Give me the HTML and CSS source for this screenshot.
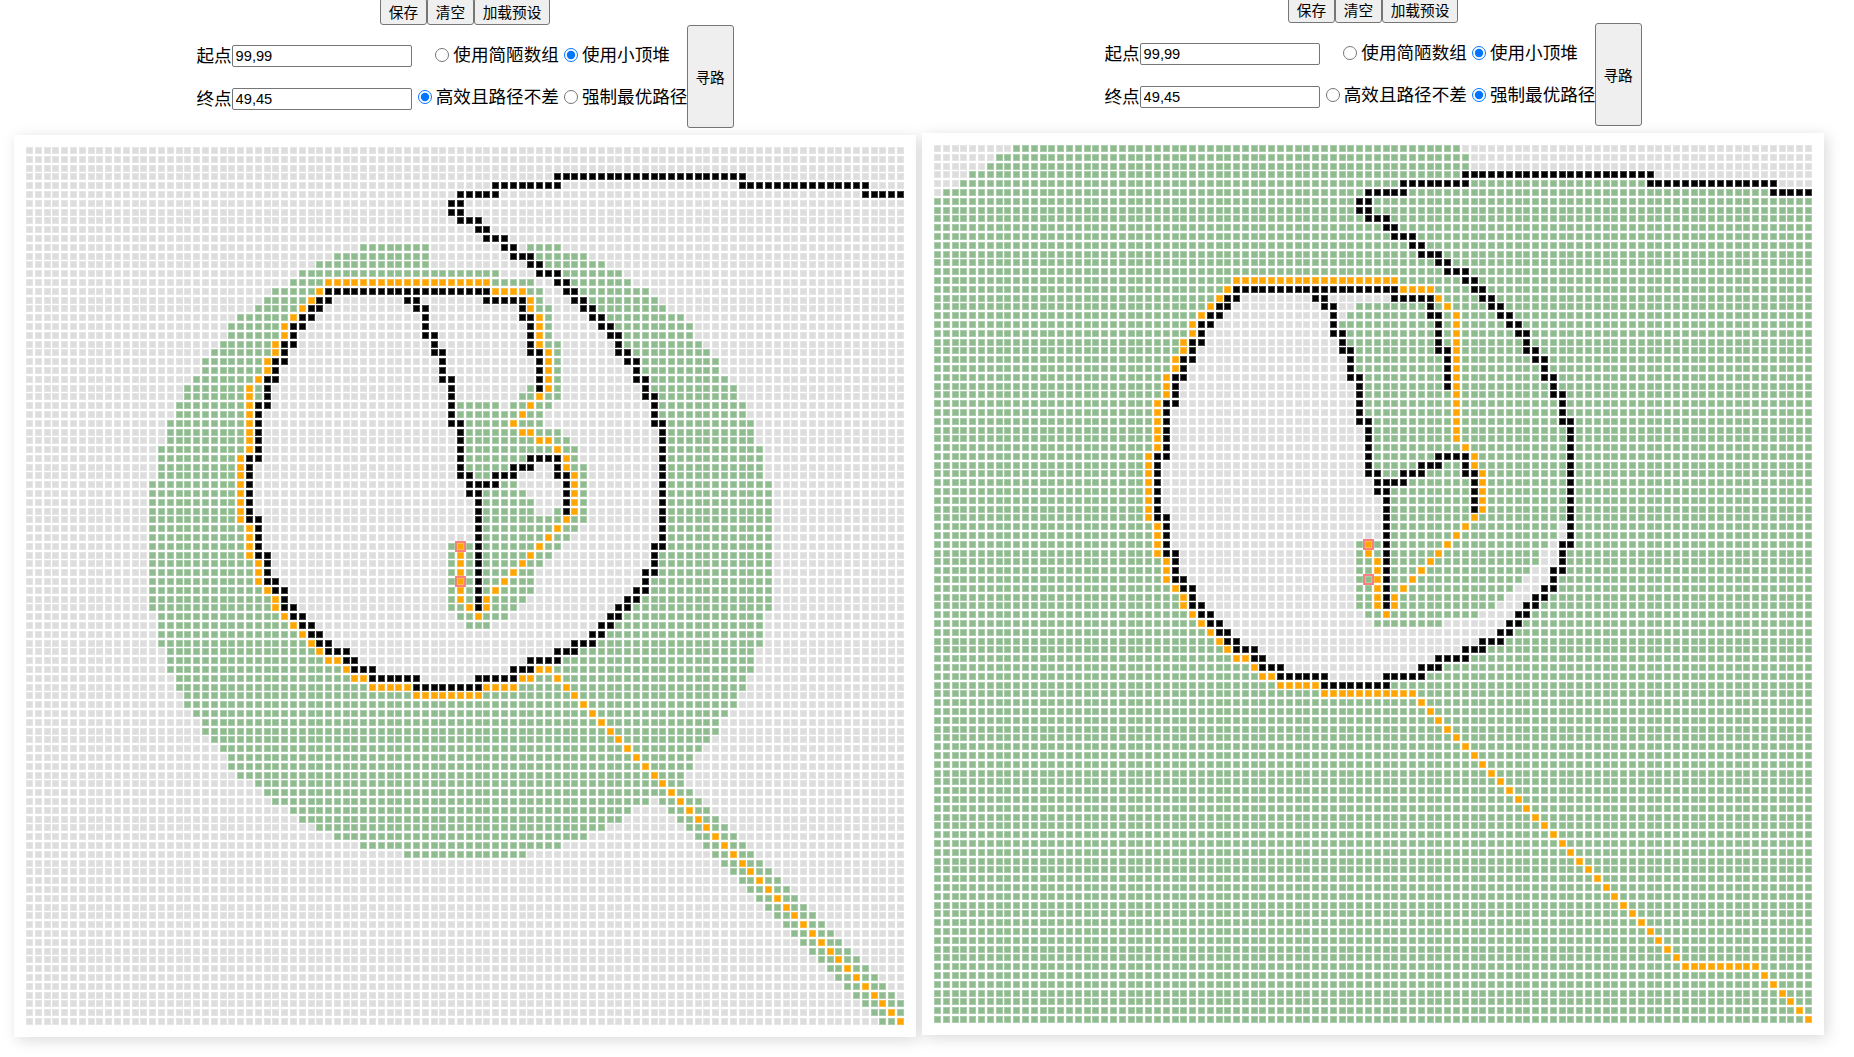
FILE: index.html
```html
<!DOCTYPE html>
<html lang="zh-CN">
<head>
<meta charset="utf-8">
<title>寻路</title>
<link rel="stylesheet" href="styles.css">
</head>
<body>
<main class="panels">
  <section class="panel">
    <div class="toolbar"><button>保存</button><button>清空</button><button>加载预设</button></div>
    <div class="form">
      <div class="points">
        <label class="point">起点<input type="text" value="99,99"></label>
        <label class="point">终点<input type="text" value="49,45"></label>
      </div>
      <div class="options">
        <div class="choice"><label><input type="radio" name="a1">使用简陋数组</label><label><input type="radio" name="a1" checked>使用小顶堆</label></div>
        <div class="choice"><label><input type="radio" name="a2" checked>高效且路径不差</label><label><input type="radio" name="a2">强制最优路径</label></div>
      </div>
      <button class="run">寻路</button>
    </div>
    <div class="board" id="fast"></div>
  </section>
  <section class="panel panel-raised">
    <div class="toolbar"><button>保存</button><button>清空</button><button>加载预设</button></div>
    <div class="form">
      <div class="points">
        <label class="point">起点<input type="text" value="99,99"></label>
        <label class="point">终点<input type="text" value="49,45"></label>
      </div>
      <div class="options">
        <div class="choice"><label><input type="radio" name="b1">使用简陋数组</label><label><input type="radio" name="b1" checked>使用小顶堆</label></div>
        <div class="choice"><label><input type="radio" name="b2">高效且路径不差</label><label><input type="radio" name="b2" checked>强制最优路径</label></div>
      </div>
      <button class="run">寻路</button>
    </div>
    <div class="board" id="best"></div>
  </section>
</main>
<script src="grid.js"></script>
</body>
</html>
```
FILE: styles.css
```css
* { box-sizing: border-box; }
body {
  margin: 0;
  height: 1057px;
  overflow: hidden;
  background: #fff;
  color: #000;
  font: 17.6px/24px "Liberation Sans", "Noto Sans CJK SC", sans-serif;
}
.panels { display: flex; align-items: flex-start; padding-left: 11px; }
.panel {
  width: 908px;
  flex: none;
  display: flex;
  flex-direction: column;
  align-items: center;
  margin-top: -2px;
}
.panel-raised { margin-top: -4px; }
.toolbar { display: flex; height: 27px; }
button {
  margin: 0;
  padding: 0 8px;
  background: #efefef;
  border: 1px solid #767676;
  border-radius: 3px;
  color: #000;
  font: 14.67px "Liberation Sans", "Noto Sans CJK SC", sans-serif;
}
.toolbar button { width: 47px; padding: 0; }
.toolbar button:last-child { width: 76px; }
.form { display: flex; height: 103px; }
.points { padding-top: 9px; }
.point { display: flex; align-items: center; height: 43px; }
.point input {
  width: 180px;
  height: 22px;
  margin: 1px 0 0;
  padding: 1px 3px;
  border: 1px solid #767676;
  border-radius: 2px;
  font: 14.67px "Liberation Sans", sans-serif;
}
.options {
  display: flex;
  flex-direction: column;
  align-items: center;
  width: 275px;
  padding: 9px 0 0 7px;
}
.choice { display: flex; gap: 5px; height: 42px; align-items: center; }
.choice label { display: flex; align-items: center; white-space: nowrap; }
.choice input { width: 14px; height: 14px; margin: 0 4px 1px 0; }
.run { width: 47px; height: 103px; padding: 0; }
.board {
  display: grid;
  grid-template: repeat(100, 8.8px) / repeat(100, 8.8px);
  margin-top: 7px;
  padding: 12px 10px 10px 12px;
  width: 902px;
  height: 902px;
  background: #fff;
  box-shadow: 3px 3px 14px rgba(0, 0, 0, .15);
}
.cell {
  width: 7px;
  height: 7px;
  background: #ddd;
  border: 1px solid rgba(255, 255, 255, .25);
}
.visited { background: #8fbc8f; }
.wall { background: #000; }
.path { background: #ffa500; }
.mark { outline: 2px solid #fa8080; }
```
FILE: grid.js
```js
// Each line is "row[-row]: col[-col] ..." with inclusive ranges.
const walls = `3:60-81
4:53-60 81-95
5:49-53 95-99
6-7:48-49
8:49-51
9:51-52
10:52-54
11:54-55
12:55-57
13:57-58
14:58-60
15:60-61
16:34-52 61-62
17:33-34 43-44 52-56 62-63
18:32-33 44-45 56 63-64
19:31-32 45 56-57 64-65
20:30-31 45 57 65-66
21:30 45-46 57 66-67
22:29-30 46 57 67
23:29 46-47 57-58 67-68
24:28-29 47 58 68-69
25:28 47 58 69
26:27-28 47-48 58 69-70
27:27 48 58 70
28:27 48 70-71
29:26-27 48 71
30:26 48 71
31:26 48-49 71-72
32-34:26 49 72
35:25-26 49 57-60 72
36:25 49 55-57 60 72
37:25 49-50 53-55 60-61 72
38:25 50-53 61 72
39:25 50-51 61 72
40-41:25 51 61 72
42:25-26 51 72
43-44:26 51 72
45:26 51 71-72
46:26-27 51 71
47:27 51 71
48:27 51 70-71
49:27-28 51 70
50:28-29 51 69-70
51:29 51 68-69
52:29-30 51 67-68
53:30-31 66-67
54:31-32 65-66
55:32-33 64-65
56:33-34 62-64
57:34-36 60-62
58:36-37 57-60
59:37-39 55-57
60:39-44 51-55
61:44-51`;

const fastVisited = `11:38-45 57-60
12:35-45 58-63
13:33-45 59-65
14:31-53 61-67
15:30-33 53-57 62-68
16:28-32 57-58 63-70
17:27-31 58 64-71
18:26-30 58-59 65-72
19:24-29 59 66-74
20:23-28 59 67-75
21:23-28 59 68-75
22:22-27 59-60 68-76
23:21-27 60 69-77
24:20-26 60 70-78
25:20-26 60 70-78
26:19-25 60 71-79
27:18-26 57 60 71-80
28:18-26 56-60 72-80
29:17-24 49-53 55-59 72-81
30:17-24 49-58 72-81
31:16-24 50-58 73-82
32:16-24 50-60 73-82
33:16-24 50-61 73-82
34:15-24 50-62 73-83
35:15-23 50-62 73-83
36:15-23 50-54 62-63 73-83
37:15-23 51-52 63 73-83
38:14-23 54-55 63 73-84
39:14-23 52-56 63 73-84
40:14-23 52-57 63 73-84
41:14-23 52-57 60 63 73-84
42:14-23 52-60 62-63 73-84
43:14-24 52-62 73-84
44:14-24 52-61 73-84
45:14-24 48-50 52-60 73-84
46:14-24 48-50 52-59 72-84
47:14-25 48-50 52-58 72-84
48:14-25 48-50 52-57 72-84
49:14-25 48-50 52-57 71-84
50:14-26 48-50 52-57 71-84
51:14-27 48-50 52-56 70-84
52:14-27 48-55 69-84
53:15-28 49-54 68-83
54:15-29 50-52 67-83
55:15-30 66-83
56:15-31 65-83
57:16-32 63-82
58:16-34 61-82
59:16-35 60-82
60:17-37 58-81
61:17-40 56-81
62:18-80
63:18-80
64:19-79
65:20-78
66:20-78
67:21-77
68:22-76
69:23-75
70:23-75
71:24-74
72:26-74
73:27-75
74:28-70
75:30-68
76:31-67
77:33-65
78:35-63
79:38-60
80:43-56`;

const fastPath = `15:34-52
16:33 53-56
17:32 57
18:31 57
19:30 58
20-21:29 58
22:28 58
23:28 59
24-25:27 59
26:26 59
27:25 59
28:25 58
29:25 57
30:25 56
31:25 55
32:25 56-57
33:25 58-59
34:25 60
35-36:24 61
37-41:24 62
42:24 61
43:25 60
44:25 59
45:25 49 58
46:25 49 57
47:26 49 56
48:26 49 55
49:26 49 54
50:27 49 53
51:28 49 52
52:28 50 52
53:29 51
54:30
55:31
56:32
57:33
58:34-35
59:36 58-59
60:37-38 56-57 60
61:39-43 52-55 61
62:44-51 62`;

const bestUnvisited = `0:0-8 60-99
1:0-6 61-99
2:0-5 61-99
3:0-3 82-99
4:0-2 96-99
5:0
17:35-51
18:34-47
19:33-46
20:32-44
21-22:31-45
23:30-46
24-25:29-46
26:29-46
27-28:28-47
29:28-47
30-31:27-47
32-35:27-48
36:26-48
37:26-48
38-39:26-49
40-44:26-50
43-44:71
45:27-47 70
46:28-47 69-70
47:28-47 69-70
48:28-47 68-69
49:29-47 67-69
50:30-47 66-68
51:30-47 65-67
52:31-47 64-66
53:32-48 62-65
54:33-49 58-64
55:34-63
56:35-61
57:37-59
58:38-56
59:40-54
60:45-50`;

const bestPath = `15:34-52
16:33 53-56
17:32 57
18:31 58
19:30 59
20-21:29 59
22-23:28 59
24-25:27 59
26-28:26 59
29-33:25 59
34:25 60
35-36:24 61
37-41:24 62
42:24 61
43:25 60
44:25 59
45:25 49 58
46:25 49 57
47:26 50 56
48:26 50 55
49:26 50 54
50:27 50 53
51:28 50 52
52:28 50 52
53:29 51
54:30
55:31
56:32
57:33
58:34-35
59:36
60:37-38
61:39-43
62:44-54
93:85-93`;

const SIZE = 100;
const inside = n => n >= 0 && n < SIZE;

function paint(grid, spans, kind) {
  for (const line of spans.split("\n")) {
    const [rows, cols] = line.split(":");
    const [r0, r1 = r0] = rows.split("-").map(Number);
    for (const part of cols.split(" ")) {
      const [c0, c1 = c0] = part.split("-").map(Number);
      for (let r = r0; r <= r1; r++)
        for (let c = c0; c <= c1; c++) grid[r][c] = kind;
    }
  }
}

function render(id, grid) {
  const board = document.getElementById(id);
  grid.forEach((row, r) => row.forEach((kind, c) => {
    const cell = document.createElement("div");
    cell.className = "cell " + kind;
    if (c === 49 && (r === 45 || r === 49)) cell.className += " mark";
    board.append(cell);
  }));
}

const make = kind => Array.from({ length: SIZE }, () => Array(SIZE).fill(kind));

const fast = make("");
paint(fast, fastVisited, "visited");
for (let r = 74; r < SIZE; r++)
  for (let c = r - 2; c <= r + 2; c++) if (inside(c)) fast[r][c] = "visited";
paint(fast, walls, "wall");
paint(fast, fastPath, "path");
for (let r = 63; r < SIZE; r++) fast[r][r] = "path";
render("fast", fast);

const best = make("visited");
paint(best, bestUnvisited, "");
paint(best, walls, "wall");
paint(best, bestPath, "path");
for (let r = 63; r < 93; r++) best[r][r - 8] = "path";
for (let r = 94; r < SIZE; r++) best[r][r] = "path";
render("best", best);
```
